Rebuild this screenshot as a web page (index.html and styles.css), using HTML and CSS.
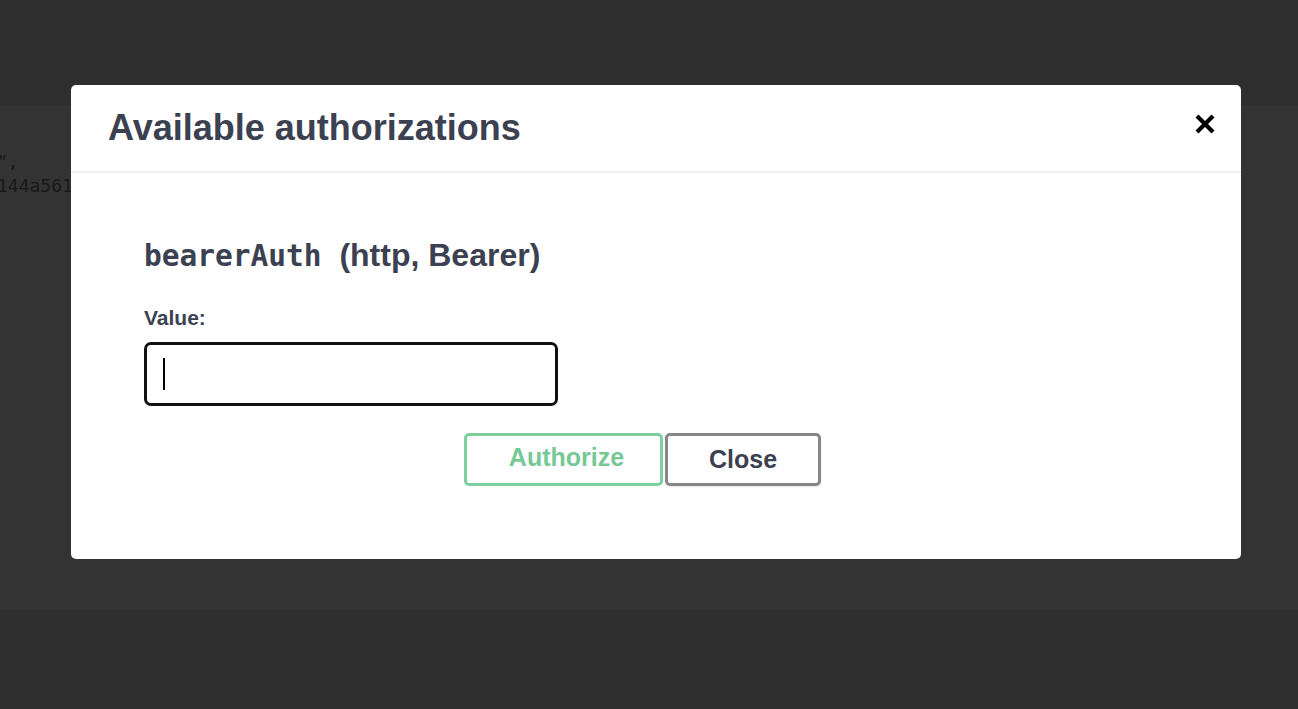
FILE: index.html
```html
<!DOCTYPE html>
<html lang="en">
<head>
<meta charset="utf-8">
<title>Available authorizations</title>
<link rel="stylesheet" href="styles.css">
</head>
<body>
<div class="page">
  <div class="topbar"></div>
  <div class="band">
    <pre class="code">",
144a561</pre>
  </div>
  <div class="bottom"></div>
</div>
<div class="overlay">
  <div class="modal" role="dialog" aria-labelledby="modal-title">
    <div class="modal-header">
      <h3 id="modal-title" class="modal-title">Available authorizations</h3>
      <button class="close-modal" type="button" aria-label="Close">
        <svg width="20" height="20" viewBox="0 0 20 20" aria-hidden="true">
          <path d="M3.5 3.5 L16.5 16.5 M16.5 3.5 L3.5 16.5" stroke="#000" stroke-width="4.2" stroke-linecap="square" fill="none"/>
        </svg>
      </button>
    </div>
    <div class="modal-content">
      <h4 class="scheme-title"><code class="scheme-name">bearerAuth</code>&nbsp; (http, Bearer)</h4>
      <label class="value-label" for="token">Value:</label>
      <div class="input-box"><span class="caret"></span></div>
      <div class="btn-row">
        <button class="btn authorize" type="button">Authorize</button>
        <button class="btn close" type="button">Close</button>
      </div>
    </div>
  </div>
</div>
</body>
</html>
```
FILE: styles.css
```css
html, body {
  margin: 0;
  padding: 0;
}
body {
  background: #2f302f;
  font-family: "Liberation Sans", Arial, sans-serif;
  color: #3b4151;
  overflow: hidden;
}
.page {
  display: flex;
  flex-direction: column;
  height: 709px;
}
.topbar {
  height: 105px;
  background: #2d2e2d;
}
.band {
  height: 505px;
  background: #333333;
  overflow: hidden;
}
.bottom {
  flex: 1;
  background: #2e2f2e;
}
.code {
  margin: 45px 0 0 -3px;
  font-family: "DejaVu Sans Mono", monospace;
  font-size: 18px;
  line-height: 24px;
  color: #191919;
}
.overlay {
  position: fixed;
  inset: 0;
  padding: 85px 0 0 71px;
}
.modal {
  width: 1170px;
  height: 474px;
  background: #fff;
  border-radius: 5px;
  box-sizing: border-box;
}
.modal-header {
  height: 88px;
  box-sizing: border-box;
  border-bottom: 2px solid #f0f0f0;
  display: flex;
  align-items: center;
  justify-content: space-between;
  padding: 0 26px 0 37px;
}
.modal-title {
  margin: 0;
  font-size: 36px;
  font-weight: 700;
  color: #3b4151;
  position: relative;
  top: 0;
}
.close-modal {
  border: 0;
  background: none;
  padding: 0;
  width: 20px;
  height: 20px;
  display: flex;
  position: relative;
  top: -4px;
}
.modal-content {
  padding: 64px 0 0 73px;
}
.scheme-title {
  margin: 0;
  font-size: 32px;
  line-height: 36px;
  font-weight: 700;
  color: #3b4151;
}
.scheme-name {
  font-family: "DejaVu Sans Mono", monospace;
  font-size: 29.5px;
  font-weight: 700;
}
.value-label {
  display: block;
  margin-top: 32px;
  font-size: 21px;
  font-weight: 700;
  line-height: 24px;
}
.input-box {
  margin-top: 12px;
  width: 414px;
  height: 64px;
  box-sizing: border-box;
  border: 3px solid #111;
  border-radius: 7px;
  display: flex;
  align-items: center;
  padding-left: 16px;
}
.caret {
  width: 2px;
  height: 32px;
  background: #000;
}
.btn-row {
  display: flex;
  gap: 2px;
  margin: 27px 0 0 320px;
}
.btn {
  height: 53px;
  box-sizing: border-box;
  background: #fff;
  font-family: "Liberation Sans", Arial, sans-serif;
  font-size: 25px;
  font-weight: 700;
  border-radius: 5px;
  padding: 0;
}
.authorize {
  width: 199px;
  border: 3px solid #7dcf9e;
  color: #76c996;
  padding: 0 0 5px 6px;
}
.close {
  width: 156px;
  border: 3px solid #878787;
  color: #3b4151;
  box-shadow: 0 1px 2px rgba(0,0,0,0.1);
}
```
